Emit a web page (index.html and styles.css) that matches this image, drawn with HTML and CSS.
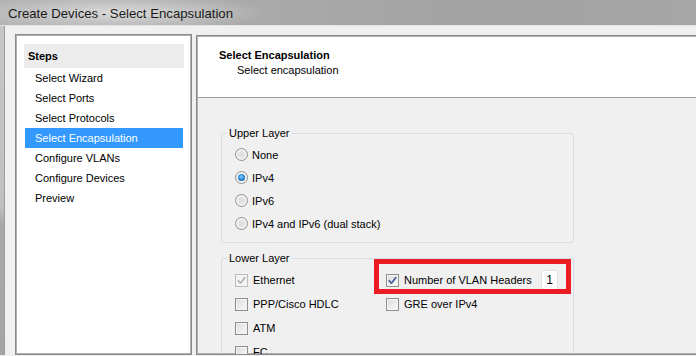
FILE: index.html
```html
<!DOCTYPE html>
<html>
<head>
<meta charset="utf-8">
<title>Create Devices - Select Encapsulation</title>
<link rel="stylesheet" href="styles.css">
</head>
<body>
<div class="titlebar"><span class="title">Create Devices - Select Encapsulation</span></div>
<div class="window">
  <div class="frame-edge"></div>
  <div class="client">
    <aside class="steps">
      <div class="steps-head">Steps</div>
      <ul class="steps-list">
        <li>Select Wizard</li>
        <li>Select Ports</li>
        <li>Select Protocols</li>
        <li class="active">Select Encapsulation</li>
        <li>Configure VLANs</li>
        <li>Configure Devices</li>
        <li>Preview</li>
      </ul>
    </aside>
    <main class="page">
      <header class="page-head">
        <div class="page-title">Select Encapsulation</div>
        <div class="page-sub">Select encapsulation</div>
      </header>
      <div class="page-body">
        <fieldset class="group upper">
          <legend>Upper Layer</legend>
          <div class="radios">
            <div class="row"><span class="radio"></span><span>None</span></div>
            <div class="row"><span class="radio on"></span><span>IPv4</span></div>
            <div class="row"><span class="radio"></span><span>IPv6</span></div>
            <div class="row"><span class="radio"></span><span>IPv4 and IPv6 (dual stack)</span></div>
          </div>
        </fieldset>
        <fieldset class="group lower">
          <legend>Lower Layer</legend>
          <div class="cols">
            <div class="col col-a">
              <div class="row crow"><span class="check disabled"><svg viewBox="0 0 11 11" width="11" height="11"><path d="M2.2 5.6 L4.4 8.2 L8.8 2.6" /></svg></span><span>Ethernet</span></div>
              <div class="row crow"><span class="check"></span><span>PPP/Cisco HDLC</span></div>
              <div class="row crow"><span class="check"></span><span>ATM</span></div>
              <div class="row crow"><span class="check"></span><span>FC</span></div>
            </div>
            <div class="col col-b">
              <div class="row crow"><span class="check checked"><svg viewBox="0 0 11 11" width="11" height="11"><path d="M2.2 5.6 L4.4 8.2 L8.8 2.6" /></svg></span><span class="vlan-label">Number of VLAN Headers</span><span class="num">1</span></div>
              <div class="row crow"><span class="check"></span><span>GRE over IPv4</span></div>
            </div>
          </div>
        </fieldset>
        <div class="callout"></div>
      </div>
    </main>
  </div>
</div>
</body>
</html>
```

FILE: styles.css
```css
html, body {
  margin: 0;
  padding: 0;
}
body {
  width: 696px;
  height: 356px;
  overflow: hidden;
  background: #f0f0f0;
  font-family: "Liberation Sans", Arial, sans-serif;
  font-size: 11px;
  color: #000;
}
.titlebar {
  height: 26px;
  border-bottom: 1px solid #e4e4e4;
  background:
    radial-gradient(ellipse 150px 18px at 118px 13px, rgba(225,225,225,0.85), rgba(225,225,225,0) 100%),
    linear-gradient(to right, #b3b3b3 0%, #a9a9a9 40%, #a2a2a2 70%, #a6a6a6 100%);
  padding-left: 8px;
  box-sizing: border-box;
  display: flex;
  align-items: center;
}
.title {
  font-size: 13.2px;
  color: #1a1a1a;
  padding-top: 1px;
}
.window {
  display: flex;
  height: 329px;
}
.frame-edge {
  width: 4px;
  background: linear-gradient(to bottom, #c6c6c6 0%, #c0c0c0 55%, #a8a8a8 60%, #a4a4a4 100%);
  border-right: 1px solid #9c9c9c;
  flex-shrink: 0;
}
.client {
  display: flex;
  gap: 4px;
  padding: 8px 0 0 10px;
  flex: 1;
  min-width: 0;
}
.steps {
  width: 177px;
  flex-shrink: 0;
  box-sizing: border-box;
  background: #fff;
  border: 1px solid #8a8a8a;
  box-shadow: inset 0 0 0 1px #b0b0b0;
  padding: 9px 7px 0 8px;
}
.steps-head {
  height: 24px;
  box-sizing: border-box;
  padding-top: 1px;
  line-height: 23px;
  background: #ececec;
  padding-left: 4px;
  font-weight: bold;
}
.steps-list {
  list-style: none;
  margin: 0;
  padding: 0;
}
.steps-list li {
  height: 20px;
  box-sizing: border-box;
  padding-top: 1px;
  line-height: 19px;
  margin: 0 1px;
  padding-left: 10px;
}
.steps-list li.active {
  background: #3399ff;
  color: #fff;
}
.page {
  width: 520px;
  flex-shrink: 0;
  margin-top: 1px;
  box-sizing: border-box;
  border: 1px solid #8a8a8a;
  box-shadow: inset 0 0 0 1px #b0b0b0;
  padding: 1px;
  display: flex;
  flex-direction: column;
  overflow: hidden;
}
.page-head {
  height: 61px;
  flex-shrink: 0;
  box-sizing: border-box;
  background: #fff;
  border-bottom: 1px solid #a0a0a0;
  padding: 10px 0 0 21px;
}
.page-title {
  font-weight: bold;
  line-height: 16px;
}
.page-sub {
  line-height: 15px;
  margin-left: 18px;
}
.page-body {
  position: relative;
  flex: 1 0 auto;
  padding: 28px 0 0 23px;
}
.group {
  width: 353px;
  box-sizing: border-box;
  margin: 0;
  padding: 0;
  border: 1px solid #d5dfe5;
  border-radius: 3px;
}
.group legend {
  margin-left: 5px;
  padding: 0 2px;
  line-height: 14px;
  height: 14px;
}
.radios {
  padding: 3px 0 7px 0;
}
.row {
  display: flex;
  align-items: center;
  height: 23px;
  padding-left: 13px;
  gap: 4px;
}
.radio {
  width: 13px;
  height: 13px;
  box-sizing: border-box;
  border-radius: 50%;
  border: 1px solid #8e8f8f;
  background: radial-gradient(circle at 50% 50%, #dcdcdc 0%, #e6e6e6 40%, #f8f8f8 75%);
  position: relative;
  flex-shrink: 0;
}
.radio.on::after {
  content: "";
  position: absolute;
  left: 2px;
  top: 2px;
  width: 7px;
  height: 7px;
  border-radius: 50%;
  background: radial-gradient(circle at 45% 40%, #8fd2ff 0%, #2f8fd6 45%, #17507e 100%);
}
.lower {
  margin-top: 8px;
  height: 150px;
}
.cols {
  display: flex;
  padding-top: 3px;
}
.col-a {
  width: 164px;
  flex-shrink: 0;
}
.crow {
  height: 24px;
  gap: 5px;
}
.col-b .crow {
  padding-left: 0;
}
.check {
  width: 13px;
  height: 13px;
  box-sizing: border-box;
  border: 1px solid #8e8f8f;
  background: linear-gradient(135deg, #dcdcdc 0%, #eeeeee 60%, #fbfbfb 100%);
  box-shadow: inset 0 0 0 1px #f4f4f4;
  flex-shrink: 0;
  display: block;
  position: relative;
}
.check svg {
  display: block;
  fill: none;
  stroke-width: 1.7;
  stroke-linecap: round;
  stroke-linejoin: round;
}
.check.disabled {
  border-color: #bcbcbc;
  background: #f4f4f4;
}
.check.disabled svg {
  stroke: #b4b4b4;
}
.check.checked svg {
  stroke: #4a5f97;
}
.vlan-label {
  width: 132px;
  flex-shrink: 0;
}
.num {
  width: 17px;
  height: 20px;
  box-sizing: border-box;
  background: #fff;
  border: 1px solid #e2e2e2;
  text-align: center;
  line-height: 18px;
  font-size: 12px;
  flex-shrink: 0;
}
.callout {
  position: absolute;
  left: 176px;
  top: 161px;
  width: 197px;
  height: 35px;
  box-sizing: border-box;
  border: 5px solid #ec1c24;
}
```
